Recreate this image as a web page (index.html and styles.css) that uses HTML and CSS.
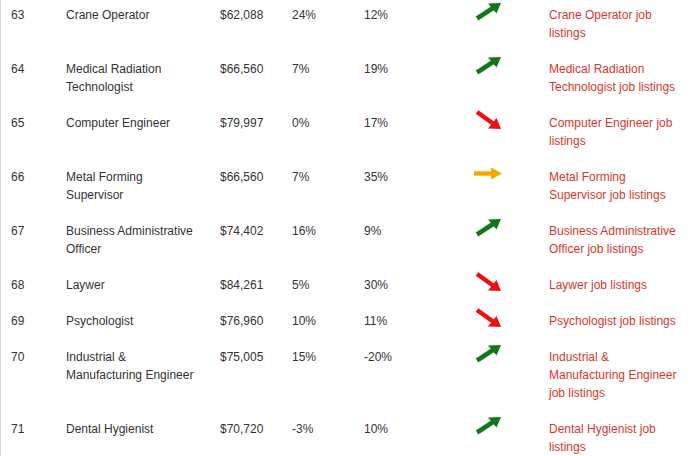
FILE: index.html
```html
<!DOCTYPE html>
<html>
<head>
<meta charset="utf-8">
<link rel="stylesheet" href="styles.css">
</head>
<body>
<div class="wrap">
<table class="jobs">
<colgroup>
<col class="c-rank"><col class="c-name"><col class="c-sal"><col class="c-g1"><col class="c-g2"><col class="c-trend"><col class="c-link">
</colgroup>
<tbody>
<tr><td>63</td><td>Crane Operator</td><td>$62,088</td><td>24%</td><td>12%</td><td class="trend"><svg class="arrow" width="28" height="20" viewBox="0 0 28 20"><use href="#up"/></svg></td><td><a href="#">Crane Operator job listings</a></td></tr>
<tr><td>64</td><td>Medical Radiation Technologist</td><td>$66,560</td><td>7%</td><td>19%</td><td class="trend"><svg class="arrow" width="28" height="20" viewBox="0 0 28 20"><use href="#up"/></svg></td><td><a href="#">Medical Radiation Technologist job listings</a></td></tr>
<tr><td>65</td><td>Computer Engineer</td><td>$79,997</td><td>0%</td><td>17%</td><td class="trend"><svg class="arrow" width="28" height="20" viewBox="0 0 28 20"><use href="#down"/></svg></td><td><a href="#">Computer Engineer job listings</a></td></tr>
<tr><td>66</td><td>Metal Forming Supervisor</td><td>$66,560</td><td>7%</td><td>35%</td><td class="trend"><svg class="arrow" width="28" height="20" viewBox="0 0 28 20"><use href="#flat"/></svg></td><td><a href="#">Metal Forming Supervisor job listings</a></td></tr>
<tr><td>67</td><td>Business Administrative Officer</td><td>$74,402</td><td>16%</td><td>9%</td><td class="trend"><svg class="arrow" width="28" height="20" viewBox="0 0 28 20"><use href="#up"/></svg></td><td><a href="#">Business Administrative Officer job listings</a></td></tr>
<tr><td>68</td><td>Laywer</td><td>$84,261</td><td>5%</td><td>30%</td><td class="trend"><svg class="arrow" width="28" height="20" viewBox="0 0 28 20"><use href="#down"/></svg></td><td><a href="#">Laywer job listings</a></td></tr>
<tr><td>69</td><td>Psychologist</td><td>$76,960</td><td>10%</td><td>11%</td><td class="trend"><svg class="arrow" width="28" height="20" viewBox="0 0 28 20"><use href="#down"/></svg></td><td><a href="#">Psychologist job listings</a></td></tr>
<tr><td>70</td><td>Industrial &amp; Manufacturing Engineer</td><td>$75,005</td><td>15%</td><td>-20%</td><td class="trend"><svg class="arrow" width="28" height="20" viewBox="0 0 28 20"><use href="#up"/></svg></td><td><a href="#">Industrial &amp; Manufacturing Engineer job listings</a></td></tr>
<tr><td>71</td><td>Dental Hygienist</td><td>$70,720</td><td>-3%</td><td>10%</td><td class="trend"><svg class="arrow" width="28" height="20" viewBox="0 0 28 20"><use href="#up"/></svg></td><td><a href="#">Dental Hygienist job listings</a></td></tr>
</tbody>
</table>
</div>
<svg class="defs" width="0" height="0">
<defs>
<g id="up">
<line x1="3" y1="16.5" x2="19" y2="6" stroke="#11781a" stroke-width="4.6"/>
<polygon points="27,1 22.5,11.5 14,1.5" fill="#11781a"/>
</g>
<g id="down">
<line x1="3" y1="2" x2="19" y2="13.5" stroke="#ee1010" stroke-width="4.6"/>
<polygon points="27,19 14,18.5 22.5,8" fill="#ee1010"/>
</g>
<g id="flat">
<line x1="0" y1="9.5" x2="19" y2="9.5" stroke="#f6a800" stroke-width="4.4"/>
<polygon points="28,9.5 17,3.5 17,15.5" fill="#f6a800"/>
</g>
</defs>
</svg>
</body>
</html>
```
FILE: styles.css
```css
html, body {
  margin: 0;
  padding: 0;
  background: #ffffff;
}
.wrap {
  border-left: 1px solid #d6d6d6;
  min-height: 456px;
  box-sizing: border-box;
}
.jobs {
  width: 693px;
  table-layout: fixed;
  border-collapse: collapse;
  border-spacing: 0;
  font-family: Arial, "Liberation Sans", sans-serif;
  font-size: 12px;
  line-height: 18px;
  color: #333333;
}
.c-rank { width: 55px; }
.c-name { width: 154px; }
.c-sal { width: 72px; }
.c-g1 { width: 72px; }
.c-g2 { width: 110px; }
.c-trend { width: 75px; }
.c-link { width: 155px; }
.jobs td {
  vertical-align: top;
  padding: 9px 10px 9px 10px;
}
.jobs td:last-child {
  padding-right: 12px;
}
.jobs tr:first-child td {
  padding-top: 6px;
}
.jobs td.trend {
  padding-top: 5px;
}
.jobs tr:first-child td.trend {
  padding-top: 2px;
}
.arrow {
  display: block;
}
.jobs a {
  color: #d5372d;
  text-decoration: none;
}
.defs {
  position: absolute;
  width: 0;
  height: 0;
  overflow: hidden;
}
```
